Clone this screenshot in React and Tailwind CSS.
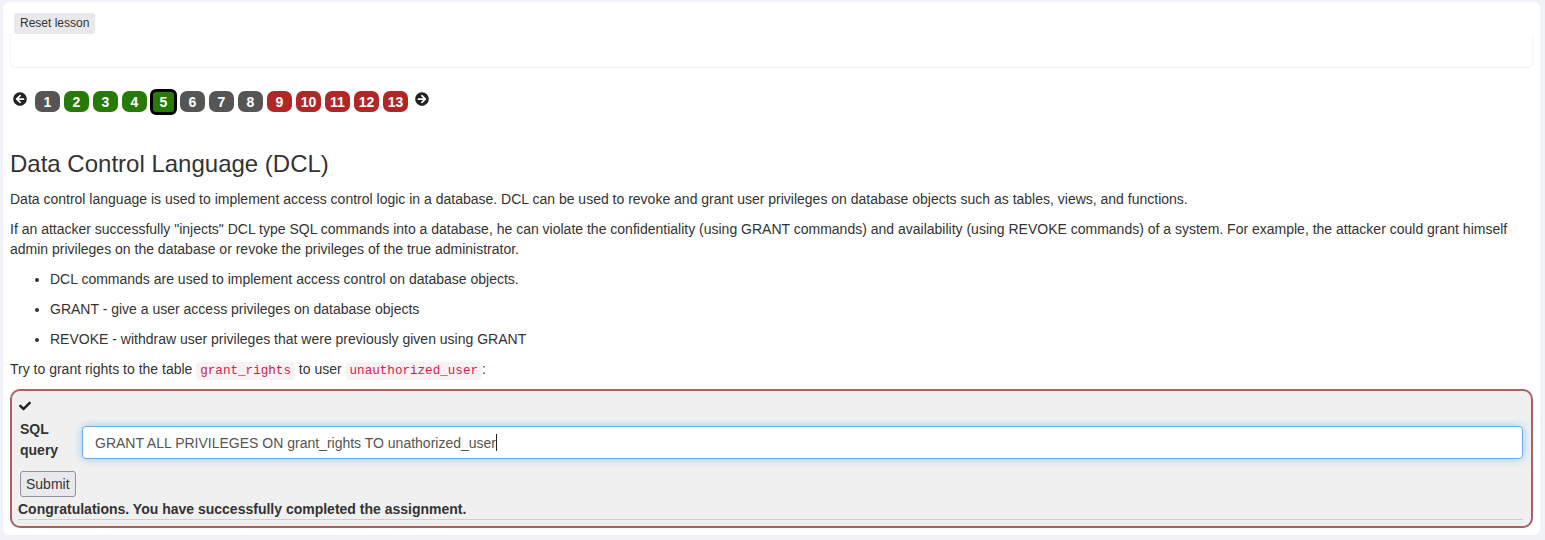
import { FaArrowCircleLeft, FaArrowCircleRight, FaCheck } from "react-icons/fa";

const pages = [
  { n: 1, kind: "gray" },
  { n: 2, kind: "green" },
  { n: 3, kind: "green" },
  { n: 4, kind: "green" },
  { n: 5, kind: "green", current: true },
  { n: 6, kind: "gray" },
  { n: 7, kind: "gray" },
  { n: 8, kind: "gray" },
  { n: 9, kind: "red" },
  { n: 10, kind: "red" },
  { n: 11, kind: "red" },
  { n: 12, kind: "red" },
  { n: 13, kind: "red" },
];

const kindClass = {
  gray: "bg-[#555555]",
  green: "bg-[#287a06]",
  red: "bg-[#b12727]",
};

const Code = ({ children }) => (
  <code className="font-['Liberation_Mono',monospace] text-[12.6px] px-[4px] py-[2px] rounded-[4px] bg-[#f9f2f4] text-[#c7254e]">
    {children}
  </code>
);

const App = () => {
  return (
    <div className="min-h-[540px] bg-[#f1f2f7] pt-[2px] pl-[3px] pr-[5px] pb-[6px] font-['Liberation_Sans',Arial,sans-serif] text-[14px] leading-[20px] text-[#333333]">
      <div className="bg-white rounded-[6px] px-[7px] pt-[10px] pb-[7px]">
        {/* Lesson menu */}
        <div className="px-[4px]">
          <button className="bg-[#e8e8ed] text-[#333] text-[12px] leading-[15px] px-[6px] py-[3px] rounded-[3px]">
            Reset lesson
          </button>
        </div>
        <div className="h-[33px] rounded-b-[6px] shadow-[0_1px_2px_rgba(0,0,0,0.06)] border-l border-r border-[#f6f6f6]" />

        {/* Pagination */}
        <div className="flex items-center mt-[24px] pl-[3px] h-[21px]">
          <FaArrowCircleLeft className="text-[#222] text-[14px] mr-[8px] -mt-[6px]" />
          <div className="flex items-center gap-[4px]">
            {pages.map((p) =>
              p.current ? (
                <div
                  key={p.n}
                  className={`${kindClass[p.kind]} border-[3px] border-black w-[27px] h-[26px] -mx-px rounded-[6px] flex items-center justify-center text-white font-bold text-[14px] leading-none`}
                >
                  {p.n}
                </div>
              ) : (
                <div
                  key={p.n}
                  className={`${kindClass[p.kind]} w-[25px] h-[21px] rounded-[7px] flex items-center justify-center text-white font-bold text-[14px] leading-none`}
                >
                  {p.n}
                </div>
              )
            )}
          </div>
          <FaArrowCircleRight className="text-[#222] text-[14px] ml-[7px] -mt-[6px]" />
        </div>

        {/* Lesson content */}
        <h3 className="text-[24px] leading-[26px] font-normal mt-[39px] mb-[12px]">
          Data Control Language (DCL)
        </h3>
        <p className="mb-[10px]">
          Data control language is used to implement access control logic in a database. DCL can be
          used to revoke and grant user privileges on database objects such as tables, views, and
          functions.
        </p>
        <p className="mb-[10px]">
          If an attacker successfully "injects" DCL type SQL commands into a database, he can violate
          the confidentiality (using GRANT commands) and availability (using REVOKE commands) of a
          system. For example, the attacker could grant himself admin privileges on the database or
          revoke the privileges of the true administrator.
        </p>
        <ul className="list-disc pl-[40px] mb-[10px]">
          <li className="mb-[10px]">DCL commands are used to implement access control on database objects.</li>
          <li className="mb-[10px]">GRANT - give a user access privileges on database objects</li>
          <li>REVOKE - withdraw user privileges that were previously given using GRANT</li>
        </ul>
        <p className="mb-[8px]">
          Try to grant rights to the table <Code>grant_rights</Code> to user{" "}
          <Code>unauthorized_user</Code>:
        </p>

        {/* Attack form */}
        <div className="border-2 border-[#a86262] rounded-[10px] bg-[#f0f0f0] pl-[6px] pr-[8px] pt-[9px] pb-[6px]">
          <FaCheck className="text-[#222] text-[12px] ml-[1px]" />
          <div className="flex items-start mt-[7px] pl-[2px]">
            <div className="font-bold w-[62px] leading-[21px]">
              SQL
              <br />
              query
            </div>
            <div className="flex-1 h-[33px] mt-[7px] bg-white border border-[#66afe9] rounded-[4px] shadow-[0_0_8px_rgba(102,175,233,0.6)] flex items-center pl-[12px] text-[#555]">
              GRANT ALL PRIVILEGES ON grant_rights TO unathorized_user
              <span className="inline-block w-px h-[17px] bg-[#222]" />
            </div>
          </div>
          <div className="mt-[10px] pl-[2px]">
            <button className="bg-[#e9e9ed] border border-[#8f8f9d] rounded-[3px] px-[5px] h-[26px] text-[14px] text-[#333]">
              Submit
            </button>
          </div>
          <div className="font-bold mt-[2px]">
            Congratulations. You have successfully completed the assignment.
          </div>
          <div className="border-t border-[#cfcfcf]" />
        </div>
      </div>
    </div>
  );
};

export default App;
